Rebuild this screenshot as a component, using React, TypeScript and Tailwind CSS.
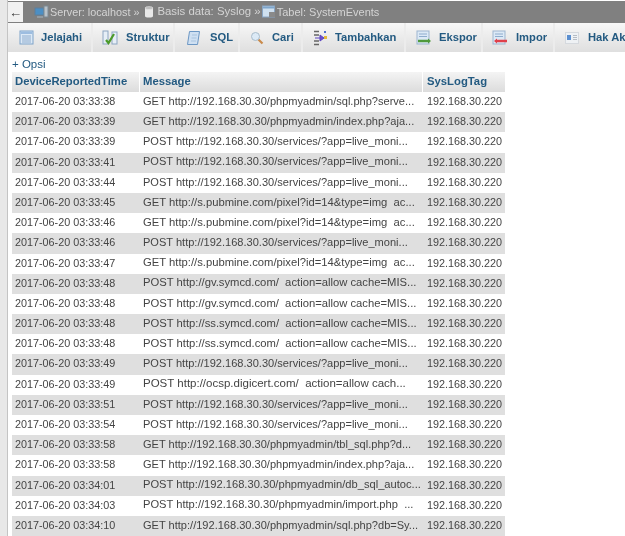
const times = ["03:33:38","03:33:39","03:33:39","03:33:41","03:33:44","03:33:45","03:33:46","03:33:46","03:33:47","03:33:48","03:33:48","03:33:48","03:33:48","03:33:49","03:33:49","03:33:51","03:33:54","03:33:58","03:33:58","03:34:01","03:34:03","03:34:10"];
const live = "POST http://192.168.30.30/services/?app=live_moni...";
const pub = "GET http://s.pubmine.com/pixel?id=14&type=img  ac...";
const gv = "POST http://gv.symcd.com/  action=allow cache=MIS...";
const ss = "POST http://ss.symcd.com/  action=allow cache=MIS...";
const msgs = [
  "GET http://192.168.30.30/phpmyadmin/sql.php?serve...",
  "GET http://192.168.30.30/phpmyadmin/index.php?aja...",
  live, live, live, pub, pub, live, pub, gv, gv, ss, ss, live,
  "POST http://ocsp.digicert.com/  action=allow cach...",
  live, live,
  "GET http://192.168.30.30/phpmyadmin/tbl_sql.php?d...",
  "GET http://192.168.30.30/phpmyadmin/index.php?aja...",
  "POST http://192.168.30.30/phpmyadmin/db_sql_autoc...",
  "POST http://192.168.30.30/phpmyadmin/import.php  ...",
  "GET http://192.168.30.30/phpmyadmin/sql.php?db=Sy...",
];

const msgSize = (m: string) => {
  if (m.includes("ocsp")) return "text-[11.5px]";
  if (m.includes("pubmine") || m.includes("symcd")) return "text-[11.25px]";
  if (m.includes("db_sql") || m.includes("import")) return "text-[11.15px]";
  return "text-[11.05px]";
};

const TableIcon = () => (
  <svg width="15" height="15" viewBox="0 0 15 15">
    <rect x="1" y="1" width="13" height="13" fill="#dce9f6" stroke="#7fa3c9" />
    <rect x="1.500" y="1.500" width="12" height="2.500" fill="#9dbde0" />
    <path d="M3 6h9M3 8h9M3 10h9M3 12h9" stroke="#8eaccd" />
  </svg>
);
const StrukturIcon = () => (
  <svg width="16" height="15" viewBox="0 0 16 15">
    <rect x="1" y="1" width="5" height="13" fill="#e6eef6" stroke="#8da6c2" />
    <rect x="10" y="2" width="5" height="12" fill="#e6eef6" stroke="#8da6c2" />
    <path d="M4 10l2.500 3L12 4" fill="none" stroke="#4c9a2a" strokeWidth="2.200" />
  </svg>
);
const SqlIcon = () => (
  <svg width="15" height="16" viewBox="0 0 15 16">
    <path d="M3.500 1.500h10L11.500 14.500H1.500z" fill="#cfe0f2" stroke="#6c97c4" />
    <path d="M6 5h5M5.500 8h5M5 11h5" stroke="#a9c4df" />
  </svg>
);
const SearchIcon = () => (
  <svg width="14" height="14" viewBox="0 0 14 14">
    <path d="M8 8l4.500 4.500" stroke="#c98a4b" strokeWidth="2.200" />
    <circle cx="5.500" cy="5.500" r="4" fill="#dceaf6" stroke="#a9bccb" />
  </svg>
);
const InsertIcon = () => (
  <svg width="15" height="16" viewBox="0 0 15 16">
    <path d="M1 1.500h5M1 5h5M1 11h5M1 14.500h5" stroke="#666" strokeWidth="1.400" />
    <path d="M2 8h5V5l4 3-4 3V8" fill="#6a4fd0" stroke="#5b45c0" />
    <rect x="11" y="1" width="2" height="2" fill="#4b6fd0" />
    <rect x="11" y="6" width="3" height="3" fill="#e2b93b" />
  </svg>
);
const ExportIcon = () => (
  <svg width="16" height="15" viewBox="0 0 16 15">
    <rect x="1" y="1" width="12" height="13" fill="#dce9f6" stroke="#9db5cf" />
    <path d="M3 4h8M3 6.500h8" stroke="#8eaccd" />
    <path d="M2 11h10" stroke="#4f9a3c" strokeWidth="2.500" />
    <path d="M12 8.500l3 2.500-3 2.500z" fill="#4f9a3c" />
  </svg>
);
const ImportIcon = () => (
  <svg width="16" height="15" viewBox="0 0 16 15">
    <rect x="1" y="1" width="12" height="13" fill="#dce9f6" stroke="#9db5cf" />
    <path d="M3 4h8M3 6.500h8" stroke="#8eaccd" />
    <path d="M5 11h10" stroke="#e0404a" strokeWidth="2.500" />
    <path d="M5 8.500l-3 2.500 3 2.500z" fill="#e0404a" />
  </svg>
);
const PrivIcon = () => (
  <svg width="14" height="12" viewBox="0 0 14 12">
    <rect x="0.500" y="0.500" width="13" height="11" fill="#eef1f4" stroke="#d5d9de" />
    <rect x="2" y="3" width="4" height="5" fill="#5b8fd0" />
    <path d="M8 3.500h4M8 5.500h4M8 7.500h4" stroke="#b5bcc4" />
  </svg>
);
const ServerIcon = () => (
  <svg width="15" height="14" viewBox="0 0 15 14">
    <rect x="1" y="3" width="9" height="7" fill="#4c8fc4" stroke="#5e7f9a" />
    <rect x="10" y="1" width="4" height="11" fill="#b9c2c9" stroke="#7c8a94" />
    <path d="M3 12h6" stroke="#9aa5ad" strokeWidth="1.500" />
  </svg>
);
const DbIcon = () => (
  <svg width="10" height="12" viewBox="0 0 10 12">
    <path d="M1 2v8c0 1 1.500 1.500 4 1.500S9 11 9 10V2z" fill="#e8e8e8" />
    <ellipse cx="5" cy="2" rx="4" ry="1.500" fill="#bdbdbd" stroke="#eee" strokeWidth="0.500" />
  </svg>
);
const SmallTableIcon = () => (
  <svg width="14" height="13" viewBox="0 0 14 13">
    <rect x="0.500" y="1" width="12" height="11" fill="#cfe0ef" stroke="#8aa6c4" />
    <rect x="1" y="1.500" width="11" height="2" fill="#7fa6cc" />
    <rect x="7" y="7" width="6" height="5" fill="#8a8a8a" />
  </svg>
);

const tabs = [
  { w: "w-[85px]", pl: "pl-[11px]", gap: "gap-[7px]", icon: <TableIcon />, label: "Jelajahi" },
  { w: "w-[82px]", pl: "pl-[9px]", gap: "gap-[8px]", icon: <StrukturIcon />, label: "Struktur" },
  { w: "w-[65px]", pl: "pl-[11px]", gap: "gap-[9px]", icon: <SqlIcon />, label: "SQL" },
  { w: "w-[63px]", pl: "pl-[10px]", gap: "gap-[8px]", icon: <SearchIcon />, label: "Cari" },
  { w: "w-[103px]", pl: "pl-[10px]", gap: "gap-[7px]", icon: <InsertIcon />, label: "Tambahkan" },
  { w: "w-[77px]", pl: "pl-[10px]", gap: "gap-[7px]", icon: <ExportIcon />, label: "Ekspor" },
  { w: "w-[72px]", pl: "pl-[9px]", gap: "gap-[8px]", icon: <ImportIcon />, label: "Impor" },
];

const th = "flex h-[20px] items-center pb-[1px] bg-gradient-to-b from-[#f4f4f4] to-[#dcdcdc] text-[11.3px] font-bold text-[#235a81]";

export default function App() {
  return (
    <div className="flex h-[536px] w-[625px] overflow-hidden bg-white font-['Liberation_Sans',Arial,sans-serif] blur-[0.35px]">
      <div className="h-full w-[8px] shrink-0 border-r border-[#c4c4c4] bg-[#e8e8e8]" />
      <div className="flex min-w-0 flex-1 flex-col">
        <div className="mt-[1px] flex h-[22px] shrink-0 items-center bg-[#808080] text-[#d4d4d4]">
          <div className="flex h-[20px] w-[15px] items-center justify-center bg-[#f1f1f1] text-[13px] leading-none text-[#333]">←</div>
          <div className="ml-[11px] flex items-center whitespace-nowrap">
            <ServerIcon />
            <span className="ml-[1px] text-[10.8px]">Server: localhost »</span>
            <span className="ml-[5px]"><DbIcon /></span>
            <span className="ml-[3px] text-[11.4px]">Basis data: Syslog »</span>
            <span className="ml-[1px]"><SmallTableIcon /></span>
            <span className="ml-[1px] text-[11px]">Tabel: SystemEvents</span>
          </div>
        </div>
        <div className="flex h-[29px] shrink-0 bg-gradient-to-b from-[#f7f7f7] to-[#dfdfdf] text-[11.2px] font-bold text-[#235a81]">
          {tabs.map((t) => (
            <div key={t.label} className={`flex ${t.w} ${t.pl} ${t.gap} shrink-0 items-center border-r-2 border-[#ececec]`}>
              {t.icon}
              <span>{t.label}</span>
            </div>
          ))}
          <div className="flex shrink-0 items-center gap-[9px] whitespace-nowrap pl-[10px]">
            <PrivIcon />
            <span>Hak Ak</span>
          </div>
        </div>
        <div className="ml-[4px] mt-[5px] text-[11.5px] leading-[14px] text-[#235a81]">+ Opsi</div>
        <div className="ml-[4px] mt-[1px] grid w-[493px] shrink-0 grid-cols-[128px_283px_82px] text-[10.8px] text-[#444]">
          <div className={`${th} border-r border-white pl-[3px]`}>DeviceReportedTime</div>
          <div className={`${th} border-r border-white pl-[3px]`}>Message</div>
          <div className={`${th} pl-[4px]`}>SysLogTag</div>
          {times.map((t, i) => (
            <div key={i} className={`col-span-3 grid h-[20.19px] grid-cols-subgrid items-center whitespace-pre pb-[2px] ${i % 2 ? "bg-[#dfdfdf]" : "bg-white"}`}>
              <span className="pl-[3px]">2017-06-20 {t}</span>
              <span className={`overflow-hidden pl-[3px] ${msgSize(msgs[i])}`}>{msgs[i]}</span>
              <span className="pl-[4px]">192.168.30.220</span>
            </div>
          ))}
        </div>
      </div>
    </div>
  );
}
